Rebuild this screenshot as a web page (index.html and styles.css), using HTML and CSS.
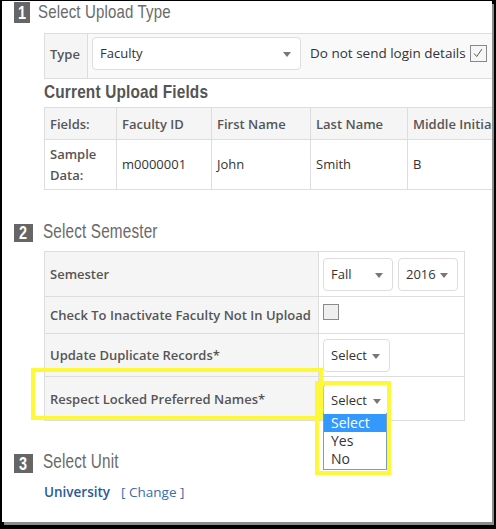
FILE: index.html
```html
<!DOCTYPE html>
<html>
<head>
<meta charset="utf-8">
<link rel="stylesheet" href="styles.css">
</head>
<body>
<div class="frame">
  <div class="sec-head first"><span class="badge b1"><span class="num">1</span></span><span class="title">Select Upload Type</span></div>
  <div class="typebox">
    <div class="type-label">Type</div>
    <div class="type-ctrl">
      <div class="select sel-type"><span>Faculty</span><i class="caret"></i></div>
      <span class="nologin">Do not send login details</span>
      <span class="chk checked"><svg viewBox="0 0 16 16" width="14" height="14"><path d="M3.5 8.5 L6.5 12 L12.5 3.5" fill="none" stroke="#555" stroke-width="1.1"/></svg></span>
    </div>
  </div>
  <div class="subhead"><span class="subtext">Current Upload Fields</span></div>
  <table class="fields">
    <tr class="fhead">
      <td class="c1">Fields:</td><td class="c2">Faculty ID</td><td class="c3">First Name</td><td class="c4">Last Name</td><td class="c5">Middle Initial</td>
    </tr>
    <tr class="fbody">
      <td class="c1 lbl">Sample<br>Data:</td><td>m0000001</td><td>John</td><td>Smith</td><td>B</td>
    </tr>
  </table>

  <div class="sec-head second"><span class="badge"><span class="num">2</span></span><span class="title">Select Semester</span></div>
  <table class="sem">
    <tr class="r1">
      <td class="lab">Semester</td>
      <td class="ctl"><div class="ctl-row"><div class="select sel-fall"><span>Fall</span><i class="caret"></i></div><div class="select sel-year"><span>2016</span><i class="caret"></i></div></div></td>
    </tr>
    <tr class="r2">
      <td class="lab">Check To Inactivate Faculty Not In Upload</td>
      <td class="ctl"><span class="chk plain"></span></td>
    </tr>
    <tr class="r3">
      <td class="lab">Update Duplicate Records*</td>
      <td class="ctl"><div class="select sel-small"><span>Select</span><i class="caret"></i></div></td>
    </tr>
    <tr class="r4">
      <td class="lab">Respect Locked Preferred Names*</td>
      <td class="ctl"><div class="select sel-small focus"><span>Select</span><i class="caret"></i></div></td>
    </tr>
  </table>

  <div class="sec-head third"><span class="badge"><span class="num">3</span></span><span class="title">Select Unit</span></div>
  <div class="unit"><a class="uni">University</a><a class="change">[ Change ]</a></div>

  <div class="dropdown">
    <div class="opt sel">Select</div>
    <div class="opt">Yes</div>
    <div class="opt">No</div>
  </div>
  <div class="hl hl1"></div>
  <div class="hl hl2"></div>
</div>
</body>
</html>
```
FILE: styles.css
```css
html, body {
  margin: 0;
  padding: 0;
  background: #000;
}
body {
  width: 496px;
  height: 529px;
  overflow: hidden;
  font-family: "Open Sans", "Liberation Sans", sans-serif;
  font-size: 13px;
  color: #333;
}
.frame {
  position: relative;
  margin: 1px 0 0 2px;
  width: 490px;
  height: 521px;
  background: #fff;
  box-shadow: 2px 3px 0 #8c8c8c;
  overflow: hidden;
}
.sec-head {
  display: flex;
  align-items: flex-start;
  margin-left: 12px;
  height: 18px;
}
.badge {
  display: flex;
  align-items: center;
  justify-content: center;
  width: 19px;
  height: 18px;
  background: #666;
  color: #fff;
  font-family: "Liberation Sans", sans-serif;
  font-weight: bold;
  font-size: 18px;
  line-height: 18px;
}
.num {
  display: inline-block;
  transform: scaleX(0.8);
}
.b1 {
  width: 16px;
  height: 21px;
}
.title {
  display: inline-block;
  font-family: "Liberation Sans", sans-serif;
  font-size: 20px;
  line-height: 20px;
  color: #6a6a6a;
  letter-spacing: 0.2px;
  margin-left: 10px;
  margin-top: -3px;
  transform: scaleX(0.765);
  transform-origin: 0 50%;
  white-space: nowrap;
}
.first {
  height: 21px;
  margin-top: 1px;
}
.first .title {
  margin-left: 8px;
  margin-top: 0;
  font-size: 19px;
  transform: scaleX(0.79);
}
.typebox {
  display: flex;
  margin: 10px 0 0 42px;
  width: 520px;
  height: 44px;
  border: 1px solid #ddd;
  border-right: none;
}
.type-label {
  width: 37px;
  padding-left: 5px;
  background: #f5f5f5;
  border-right: 1px solid #ddd;
  color: #555;
  font-weight: 600;
  line-height: 40px;
}
.type-ctrl {
  display: flex;
  align-items: center;
  padding-left: 4px;
  background: #f9f9f9;
  flex: 1;
}
.select {
  position: relative;
  box-sizing: border-box;
  height: 33px;
  border: 1px solid #ddd;
  border-radius: 4px;
  background: #fff;
  padding-left: 7px;
  line-height: 31px;
  color: #333;
}
.caret {
  position: absolute;
  top: 14px;
  right: 9px;
  width: 0;
  height: 0;
  border-left: 4.5px solid transparent;
  border-right: 4.5px solid transparent;
  border-top: 5px solid #777;
}
.sel-type {
  width: 209px;
  margin-top: -6px;
}
.nologin {
  margin-left: 9px;
  margin-top: -6px;
  color: #333;
  font-size: 13.5px;
}
.chk {
  box-sizing: border-box;
  display: inline-flex;
  align-items: center;
  justify-content: center;
  width: 17px;
  height: 17px;
  border: 1px solid #888;
  background: #f6f6f6;
}
.checked {
  margin-left: 4px;
  margin-top: -6px;
}
.subhead {
  margin: 3px 0 0 42px;
  height: 20px;
}
.subtext {
  display: inline-block;
  font-family: "Liberation Sans", sans-serif;
  font-weight: bold;
  font-size: 19px;
  line-height: 20px;
  color: #555;
  letter-spacing: 0.2px;
  transform: scaleX(0.81);
  transform-origin: 0 50%;
  white-space: nowrap;
}
.fields {
  margin: 5px 0 0 42px;
  border-collapse: collapse;
  width: 520px;
  table-layout: fixed;
}
.fields td {
  border: 1px solid #ddd;
  padding: 0 0 0 5px;
  vertical-align: middle;
}
.fields .c1 { width: 66px; }
.fields .c2 { width: 89px; }
.fields .c3 { width: 93px; }
.fields .c4 { width: 91px; }
.fhead td {
  height: 31px;
  background: #f5f5f5;
  color: #555;
  font-weight: 600;
}
.fbody td {
  height: 49px;
  line-height: 21px;
}
.fbody .lbl {
  color: #555;
  font-weight: 600;
}
.second {
  margin-top: 34px;
}
.sem {
  margin: 9px 0 0 42px;
  border-collapse: collapse;
  table-layout: fixed;
  width: 421px;
}
.sem td {
  border: 1px solid #ddd;
  padding: 0;
  vertical-align: middle;
}
.sem .lab {
  width: 268px;
  padding-left: 5px;
  background: #f5f5f5;
  color: #555;
  font-weight: 600;
}
.sem .ctl {
  padding-left: 4px;
  background: #fff;
}
.r1 td { height: 44px; }
.r2 td { height: 36px; }
.r3 td { height: 42px; }
.r4 td { height: 43px; }
.ctl-row {
  display: flex;
  gap: 5px;
}
.sel-fall { width: 70px; }
.sel-year { width: 60px; }
.sel-small { width: 67px; }
.r4 .sel-small { width: 68px; margin-top: 3px; }
.r3 .sel-small { margin-top: 1px; }
.focus {
  border-color: #a7c4ea;
  border-bottom-color: #fff;
  border-radius: 4px 4px 0 0;
}
.plain {
  width: 16px;
  height: 16px;
  background: #efefef;
  border-color: #8a8a8a;
  margin-top: -3px;
}
.third {
  margin-top: 33px;
  height: 19px;
}
.third .badge {
  height: 19px;
}
.unit {
  margin: 9px 0 0 42px;
  line-height: 20px;
  font-size: 13.5px;
}
.uni {
  color: #2a5a9a;
  font-weight: 600;
}
.change {
  margin-left: 11px;
  color: #3a6db0;
}
.dropdown {
  position: absolute;
  left: 321px;
  top: 412px;
  box-sizing: border-box;
  width: 64px;
  height: 57px;
  border: 1px solid #7f9db9;
  border-top: none;
  background: #fff;
  padding-top: 1px;
}
.opt {
  height: 18px;
  line-height: 18px;
  padding-left: 7px;
  font-size: 14px;
  color: #333;
}
.opt.sel {
  background: #3399ff;
  color: #fff;
}
.hl {
  position: absolute;
  box-sizing: border-box;
  border: 4px solid #fdf93a;
}
.hl1 {
  left: 29px;
  top: 367px;
  width: 292px;
  height: 52px;
}
.hl2 {
  left: 313px;
  top: 380px;
  width: 76px;
  height: 94px;
}
```
